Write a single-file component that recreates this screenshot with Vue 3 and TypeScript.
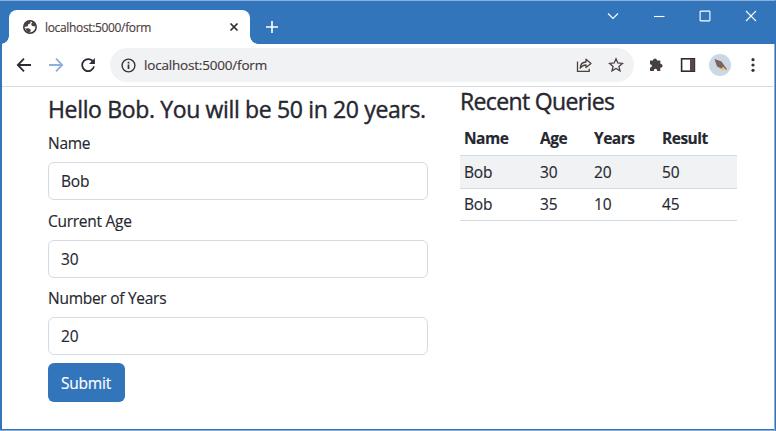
<script setup lang="ts">
import { ref } from 'vue'

interface Query {
  name: string
  age: number
  years: number
  result: number
}

const address = 'localhost:5000/form'
const name = ref('Bob')
const age = ref('30')
const years = ref('20')
const message = ref('Hello Bob. You will be 50 in 20 years.')
const queries = ref<Query[]>([
  { name: 'Bob', age: 30, years: 20, result: 50 },
  { name: 'Bob', age: 35, years: 10, result: 45 },
])

function submit(): void {
  const a = Number(age.value)
  const y = Number(years.value)
  message.value = `Hello ${name.value}. You will be ${a + y} in ${y} years.`
  queries.value.unshift({ name: name.value, age: a, years: y, result: a + y })
}
</script>

<template>
  <div class="window">
    <header class="tabs">
      <div class="tab">
        <svg class="globe" width="16" height="16" viewBox="0 0 16 16">
          <circle cx="8" cy="8" r="6.2" fill="#fff" stroke="#33323a" stroke-width="1.5" />
          <path d="M2 8V5.5L4 3 7 2l1.8.6-.6 1.9-2 .8-.4 1.9L2 8zM10.4 3l2.4 1.8L13.8 7l-1.6.6-2.4-.8L9.2 5zM3 9.4l3.8-.2 2 1.6-.6 2.8-2.6-.4z" fill="#4d4240" />
        </svg>
        <span class="tab-title">{{ address }}</span>
        <svg class="tab-close" width="10" height="10" viewBox="0 0 10 10">
          <path d="M1.5 1.5l7 7M8.5 1.5l-7 7" stroke="#2b2b33" stroke-width="1.7" />
        </svg>
      </div>
      <svg class="new-tab" width="12" height="12" viewBox="0 0 12 12">
        <path d="M6 0v12M0 6h12" stroke="#fff" stroke-width="1.6" />
      </svg>
      <div class="controls">
        <svg width="12" height="12" viewBox="0 0 12 12"><path d="M1 3.5l5 5 5-5" /></svg>
        <svg width="12" height="12" viewBox="0 0 12 12"><path d="M1 6.5h10.5" /></svg>
        <svg width="12" height="12" viewBox="0 0 12 12"><rect x="1.1" y="1.1" width="9.8" height="9.8" rx=".6" /></svg>
        <svg width="12" height="12" viewBox="0 0 12 12"><path d="M1 1l10 10M11 1L1 11" /></svg>
      </div>
    </header>

    <nav class="toolbar">
      <svg class="nav" width="16" height="16" viewBox="0 0 16 16">
        <path d="M15 8H2M8 1.7L1.8 8 8 14.3" stroke="#2b2b33" />
      </svg>
      <svg class="nav" width="16" height="16" viewBox="0 0 16 16">
        <path d="M1 8h13M8 1.7L14.2 8 8 14.3" stroke="#8fb0d8" />
      </svg>
      <svg class="nav" width="16" height="16" viewBox="0 0 16 16">
        <path d="M13.4 5.2A6 6 0 1 0 14 9.4" stroke="#2b2b33" />
        <path d="M14.9 1v6H9z" fill="#2b2b33" />
      </svg>
      <div class="omnibox">
        <svg width="15" height="15" viewBox="0 0 15 15">
          <circle cx="7.5" cy="7.5" r="6.4" fill="none" stroke="#33323a" stroke-width="1.4" />
          <path d="M7.5 6.5v4.6M7.5 3.7v1.7" stroke="#33323a" stroke-width="1.7" />
        </svg>
        <span class="url">{{ address }}</span>
        <svg class="share" width="16" height="16" viewBox="0 0 16 16">
          <path d="M1.5 4.5v9.8h11.7v-2.6" />
          <path d="M4.2 11.2C4.4 7.2 6.3 5.2 10 5V2.2l5 4.2-5 4.2V8C7.3 8 5.6 9 4.2 11.2z" stroke-linejoin="round" />
        </svg>
        <svg class="star" width="16" height="16" viewBox="0 0 16 16">
          <path d="M8 1.8l1.8 4.2 4.6.4-3.5 3 1.1 4.5L8 11.5l-4 2.4 1.1-4.5-3.5-3 4.6-.4z" />
        </svg>
      </div>
      <svg class="tool puzzle" width="16" height="16" viewBox="0 0 16 16">
        <path d="M5 3.5C5 .7 9 .7 9 3.5h3.3v3.2c3 0 3 4 0 4V14H9.2c0-3-3.4-3-3.4 0H2v-3.5c2.6 0 2.6-3.3 0-3.3V3.5z" fill="#473f43" />
      </svg>
      <svg class="tool" width="16" height="16" viewBox="0 0 16 16">
        <rect x="1.6" y="1.8" width="12.8" height="12.4" fill="#fff" stroke="#2e2b35" stroke-width="1.6" />
        <path d="M10 2h4.4v12H10z" fill="#574843" />
      </svg>
      <svg class="avatar" width="24" height="24" viewBox="0 0 24 24">
        <circle cx="12" cy="12" r="11" fill="#cbd7e5" />
        <path d="M6.5 6l7 2.5 3.5 5 2.3 3.2-5-.4-5.3-2.8z" fill="#7b6359" />
        <path d="M9 13.5l4.5 2.3 1.5-2.3 3.8 4-5.2-.8z" fill="#efbd7d" />
      </svg>
      <svg class="menu" width="4" height="16" viewBox="0 0 4 16">
        <circle cx="2" cy="2.7" r="1.6" /><circle cx="2" cy="8" r="1.6" /><circle cx="2" cy="13.3" r="1.6" />
      </svg>
    </nav>

    <main class="page">
      <form class="form" @submit.prevent="submit">
        <h4>{{ message }}</h4>
        <label for="name">Name</label>
        <input id="name" v-model="name" />
        <label for="age">Current Age</label>
        <input id="age" v-model="age" />
        <label for="years">Number of Years</label>
        <input id="years" v-model="years" />
        <button type="submit">Submit</button>
      </form>
      <section class="recent">
        <h4>Recent Queries</h4>
        <table>
          <colgroup>
            <col class="c-name" /><col class="c-age" /><col class="c-years" /><col />
          </colgroup>
          <thead>
            <tr><th>Name</th><th>Age</th><th>Years</th><th>Result</th></tr>
          </thead>
          <tbody>
            <tr v-for="(q, i) in queries" :key="i">
              <td>{{ q.name }}</td><td>{{ q.age }}</td><td>{{ q.years }}</td><td>{{ q.result }}</td>
            </tr>
          </tbody>
        </table>
      </section>
    </main>
  </div>
</template>

<style>
body {
  margin: 0;
  background: #fff;
}
</style>

<style scoped>
.window {
  box-sizing: border-box;
  width: 776px;
  height: 431px;
  border: 1px solid #8aaeda;
  border-width: 1px 1px 1px 0;
  border-right-color: #3375bb;
  box-shadow: inset 2px 0 #3375bb, inset -1px 0 #8aaeda, inset 0 -1px #3375bb;
  overflow: hidden;
  display: flex;
  flex-direction: column;
  font-family: "Open Sans", "Noto Sans", sans-serif;
  font-size: 15.5px;
  color: #26272f;
}
.tabs {
  height: 43px;
  flex: none;
  background: #3375bb;
  display: flex;
  padding-left: 9px;
}
.tab {
  position: relative;
  box-sizing: border-box;
  width: 241px;
  height: 34px;
  margin-top: 9px;
  padding: 0 11px 0 13px;
  background: #fff;
  border-radius: 8px 8px 0 0;
  display: flex;
  align-items: center;
}
.tab::before,
.tab::after {
  content: "";
  position: absolute;
  bottom: 0;
  width: 8px;
  height: 8px;
}
.tab::before {
  left: -8px;
  background: radial-gradient(circle at 0 0, transparent 7.5px, #fff 8px);
}
.tab::after {
  right: -8px;
  background: radial-gradient(circle at 100% 0, transparent 7.5px, #fff 8px);
}
.tab-title {
  flex: 1;
  margin-left: 7px;
  font-size: 12px;
  letter-spacing: -0.34px;
  color: #4b403e;
  -webkit-text-stroke: 0.15px currentColor;
}
.new-tab {
  margin: 20px 0 0 16px;
}
.controls {
  margin-left: auto;
  padding: 9px 18px 0 0;
  display: flex;
  gap: 34px;
}
.controls svg {
  fill: none;
  stroke: #fff;
  stroke-width: 1.1;
}
.toolbar {
  box-sizing: border-box;
  height: 43px;
  flex: none;
  margin: 0 2px;
  padding: 0 0 0 14px;
  border-bottom: 1px solid #d3dae2;
  display: flex;
  align-items: center;
}
.nav {
  flex: none;
  margin-right: 16px;
  fill: none;
  stroke-width: 1.8;
}
.omnibox {
  box-sizing: border-box;
  flex: none;
  width: 524px;
  height: 34px;
  margin-left: -2px;
  padding: 0 10px 0 11px;
  border-radius: 17px;
  background: #f0f2f4;
  display: flex;
  align-items: center;
}
.url {
  flex: 1;
  margin-left: 8px;
  font-size: 13.5px;
  letter-spacing: -0.19px;
  color: #43383a;
  -webkit-text-stroke: 0.15px currentColor;
}
.share,
.star {
  fill: none;
  stroke: #4b4140;
  stroke-width: 1.3;
}
.star {
  margin-left: 16px;
}
.tool {
  flex: none;
  margin-left: 16px;
}
.puzzle {
  margin-left: 14px;
}
.avatar {
  flex: none;
  margin-left: 12px;
}
.menu {
  flex: none;
  margin-left: 19px;
  fill: #33323a;
}
.page {
  display: flex;
  gap: 32px;
  padding-left: 48px;
}
.form {
  width: 380px;
  padding-top: 8px;
  display: flex;
  flex-direction: column;
  align-items: flex-start;
}
h4 {
  margin: 0;
  font-size: 23px;
  line-height: 29px;
  font-weight: 500;
  letter-spacing: -0.35px;
  white-space: nowrap;
  -webkit-text-stroke: 0.4px currentColor;
}
label {
  margin: 8.6px 0 7px;
  line-height: 24px;
  letter-spacing: -0.27px;
  -webkit-text-stroke: 0.15px currentColor;
}
h4 + label {
  margin-top: 7.3px;
}
input {
  box-sizing: border-box;
  width: 100%;
  height: 38px;
  padding: 0 12px;
  border: 1px solid #d3dbe4;
  border-radius: 6px;
  background: #fff;
  font: inherit;
  letter-spacing: -0.2px;
  color: inherit;
  -webkit-text-stroke: 0.15px currentColor;
}
button {
  height: 39px;
  width: 77px;
  margin-top: 7.7px;
  padding: 0 1px 0 0;
  border: 0;
  border-radius: 6px;
  background: #3375bb;
  color: #fff;
  font: inherit;
  letter-spacing: -0.2px;
  -webkit-text-stroke: 0.15px currentColor;
}
.recent {
  width: 277px;
}
.recent h4 {
  letter-spacing: -0.65px;
}
table {
  width: 100%;
  margin-top: 6px;
  border-collapse: collapse;
  table-layout: fixed;
}
.c-name {
  width: 76px;
}
.c-age {
  width: 54px;
}
.c-years {
  width: 68px;
}
th,
td {
  box-sizing: border-box;
  height: 33px;
  padding: 0 4px;
  border-bottom: 1px solid #d3dbe4;
  text-align: left;
  letter-spacing: -0.2px;
  -webkit-text-stroke: 0.15px currentColor;
}
th {
  letter-spacing: -0.5px;
}
tbody tr:last-child td {
  height: 32px;
}
tbody tr:nth-child(odd) {
  background: #f0f2f4;
}
</style>
